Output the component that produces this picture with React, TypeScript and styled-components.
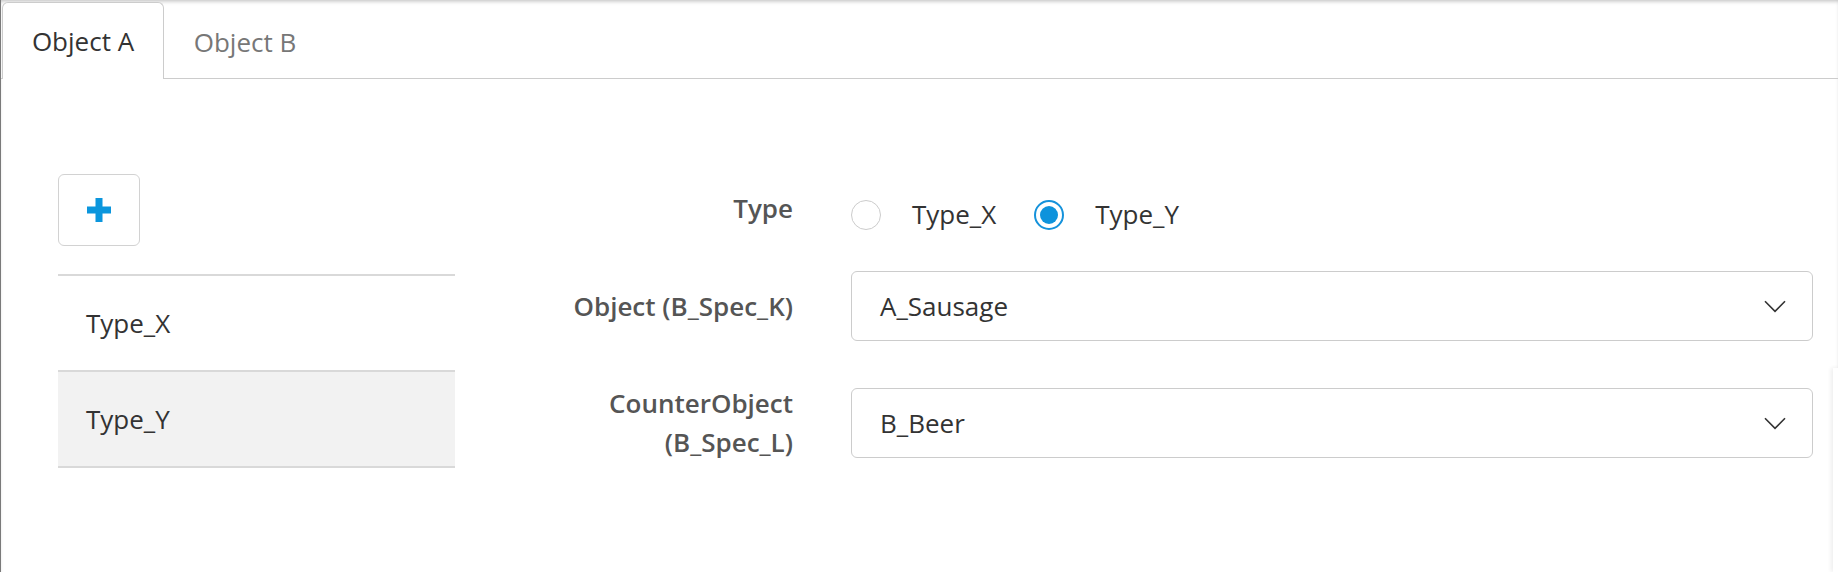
import React, { useState } from 'react';
import styled, { createGlobalStyle, css } from 'styled-components';

const GlobalStyle = createGlobalStyle`
  html, body {
    margin: 0;
    padding: 0;
    background: #ffffff;
  }
  body {
    font-family: 'Open Sans', 'Noto Sans', Arial, sans-serif;
    color: #333333;
  }
`;

const Page = styled.div`
  position: relative;
  height: 572px;
  border-left: 1px solid #7a7a7a;
  box-shadow: inset 0 3px 4px -2px rgba(0, 0, 0, 0.28);
  overflow: hidden;
`;

const TabBar = styled.div`
  display: flex;
  align-items: flex-end;
  height: 79px;
  padding: 3px 0 0 1px;
  box-sizing: border-box;
  border-bottom: 1px solid #cccccc;
`;

const Tab = styled.div<{ $active?: boolean }>`
  display: flex;
  align-items: center;
  justify-content: center;
  width: 162px;
  height: 76px;
  box-sizing: border-box;
  margin-bottom: -1px;
  font-size: 26px;
  color: #777777;
  border: 1px solid transparent;
  border-bottom: none;
  border-radius: 6px 6px 0 0;
  cursor: pointer;

  ${({ $active }) =>
    $active &&
    css`
      color: #333333;
      background: #ffffff;
      border-color: #cccccc;
      height: 77px;
    `}
`;

const Body = styled.div`
  display: flex;
  padding: 95px 25px 0 57px;
`;

const Sidebar = styled.div`
  width: 397px;
  display: flex;
  flex-direction: column;
`;

const AddButton = styled.button`
  width: 82px;
  height: 72px;
  display: flex;
  align-items: center;
  justify-content: center;
  padding: 0;
  background: #ffffff;
  border: 1px solid #d2d2d2;
  border-radius: 6px;
  cursor: pointer;
  margin-bottom: 28px;
`;

const List = styled.div`
  border-bottom: 2px solid #d9d9d9;
`;

const ListItem = styled.div<{ $selected?: boolean }>`
  height: 94px;
  display: flex;
  align-items: center;
  padding-left: 28px;
  border-top: 2px solid #d9d9d9;
  font-size: 26px;
  color: #333333;
  background: ${({ $selected }) => ($selected ? '#f2f2f2' : '#ffffff')};
  cursor: pointer;
`;

const Form = styled.div`
  flex: 1;
  display: flex;
  flex-direction: column;
  padding-top: 15px;
`;

const Row = styled.div<{ $top?: number; $align?: string }>`
  display: grid;
  grid-template-columns: 338px 1fr;
  column-gap: 58px;
  align-items: ${({ $align }) => $align || 'center'};
  margin-top: ${({ $top }) => $top || 0}px;
`;

const Label = styled.div`
  text-align: right;
  font-size: 26px;
  font-weight: 600;
  line-height: 39px;
  color: #555555;
`;

const RadioGroup = styled.div`
  display: flex;
  align-items: center;
  padding-top: 6px;
  gap: 38px;
`;

const RadioOption = styled.label`
  display: flex;
  align-items: center;
  gap: 31px;
  font-size: 26px;
  line-height: 39px;
  color: #333333;
  cursor: pointer;
`;

const RadioCircle = styled.span<{ $checked?: boolean }>`
  width: 30px;
  height: 30px;
  box-sizing: border-box;
  border-radius: 50%;
  display: flex;
  align-items: center;
  justify-content: center;
  border: 1.5px solid #cccccc;
  background: #ffffff;

  ${({ $checked }) =>
    $checked &&
    css`
      border: 2px solid #1592db;
      &::after {
        content: '';
        width: 18px;
        height: 18px;
        border-radius: 50%;
        background: #0e93dc;
      }
    `}
`;

const Select = styled.div`
  height: 70px;
  box-sizing: border-box;
  display: flex;
  align-items: center;
  justify-content: space-between;
  padding: 0 26px 0 28px;
  border: 1px solid #cccccc;
  border-radius: 6px;
  font-size: 26px;
  color: #333333;
  cursor: pointer;
`;

const SideShadow = styled.div`
  position: absolute;
  left: 1832px;
  top: 368px;
  bottom: 0;
  width: 8px;
  background: #ffffff;
  box-shadow: -2px 0 4px rgba(0, 0, 0, 0.07);
`;

const PlusIcon = () => (
  <svg width='24' height='24' viewBox='0 0 24 24'>
    <rect x='0' y='8.5' width='24' height='7' fill='#0b96dd' />
    <rect x='8.5' y='0' width='7' height='24' fill='#0b96dd' />
  </svg>
);

const Chevron = () => (
  <svg width='22' height='13' viewBox='0 0 22 13'>
    <path
      d='M1 1.2 L11 11.4 L21 1.2'
      fill='none'
      stroke='#333333'
      strokeWidth='1.6'
    />
  </svg>
);

export default function App() {
  const [tab, setTab] = useState('A');
  const [type, setType] = useState('Type_Y');

  return (
    <>
      <GlobalStyle />
      <Page>
        <TabBar>
          <Tab $active={tab === 'A'} onClick={() => setTab('A')}>
            Object A
          </Tab>
          <Tab $active={tab === 'B'} onClick={() => setTab('B')}>
            Object B
          </Tab>
        </TabBar>
        <Body>
          <Sidebar>
            <AddButton>
              <PlusIcon />
            </AddButton>
            <List>
              <ListItem $selected={type === 'Type_X'} onClick={() => setType('Type_X')}>
                Type_X
              </ListItem>
              <ListItem $selected={type === 'Type_Y'} onClick={() => setType('Type_Y')}>
                Type_Y
              </ListItem>
            </List>
          </Sidebar>
          <Form>
            <Row $align='start'>
              <Label>Type</Label>
              <RadioGroup>
                {['Type_X', 'Type_Y'].map((t) => (
                  <RadioOption key={t} onClick={() => setType(t)}>
                    <RadioCircle $checked={type === t} />
                    {t}
                  </RadioOption>
                ))}
              </RadioGroup>
            </Row>
            <Row $top={37}>
              <Label>Object (B_Spec_K)</Label>
              <Select>
                A_Sausage
                <Chevron />
              </Select>
            </Row>
            <Row $top={43}>
              <Label>
                CounterObject
                <br />
                (B_Spec_L)
              </Label>
              <Select>
                B_Beer
                <Chevron />
              </Select>
            </Row>
          </Form>
        </Body>
        <SideShadow />
      </Page>
    </>
  );
}
